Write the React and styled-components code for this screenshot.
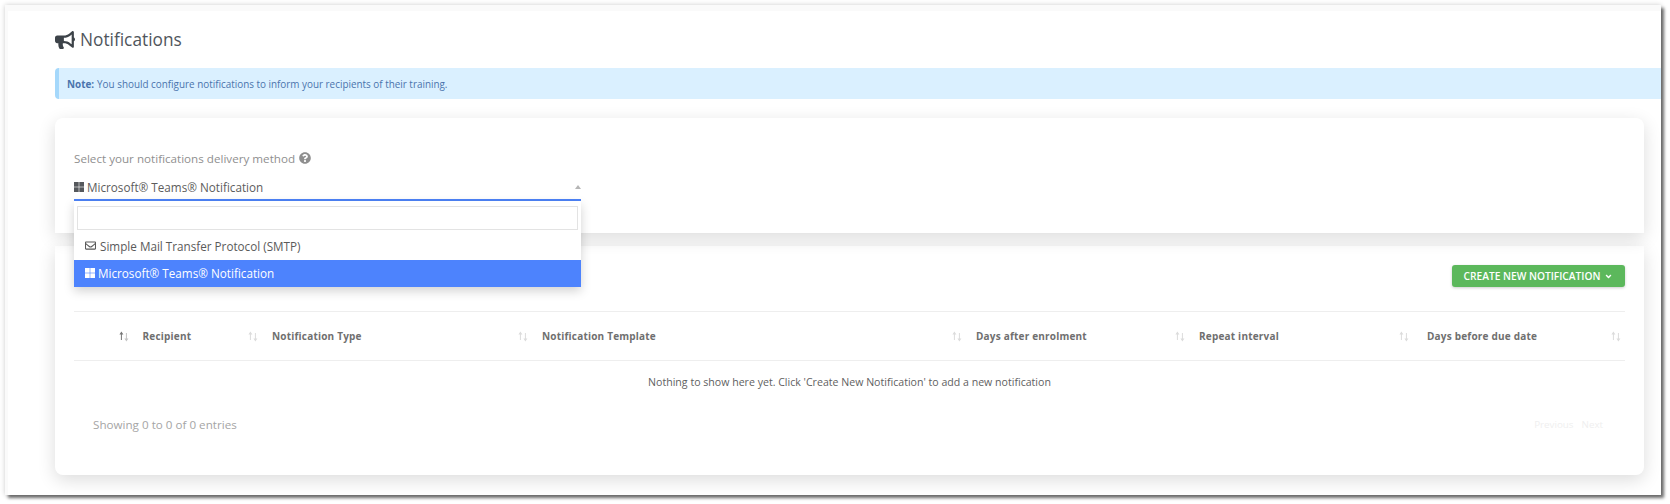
import React from "react";
import styled, { createGlobalStyle } from "styled-components";
import { FaBullhorn, FaQuestionCircle, FaRegEnvelope, FaAngleDown } from "react-icons/fa";

const GlobalStyle = createGlobalStyle`
  html {
    height: 100%;
    overflow: hidden;
  }

  body {
    box-sizing: border-box;
    min-height: 100%;
    margin: 0;
    padding: 5px 0 9px 5px;
    background: #fff;
    font-family: "Open Sans", "Noto Sans", sans-serif;
  }
`;

const Frame = styled.div`
  box-sizing: border-box;
  width: 1656px;
  height: 490px;
  background: #fff;
  border-top: 6px solid #fafafa;
  border-left: 3px solid #fafafa;
  padding-left: 47px;
  box-shadow: 3px 3px 3px rgba(0, 0, 0, 0.55), 0 0 5px rgba(0, 0, 0, 0.2);
  overflow: hidden;
`;

const TitleRow = styled.div`
  height: 57px;
  display: flex;
  align-items: center;
  gap: 5px;
  color: #3d4349;
`;

const Title = styled.h1`
  margin: 0;
  font-size: 17.3px;
  font-weight: 400;
  color: #50565c;
`;

const Alert = styled.div`
  box-sizing: border-box;
  height: 31px;
  display: flex;
  align-items: center;
  padding-left: 8px;
  background: #daf0ff;
  border-left: 4px solid #a5d8fb;
  border-radius: 4px 0 0 4px;
  font-size: 9.9px;
  color: #4a74ad;

  b {
    font-weight: 700;
    margin-right: 3px;
  }
`;

const Card = styled.section`
  position: relative;
  box-sizing: border-box;
  width: 1589px;
  padding: 0 19px;
  background: #fff;
  box-shadow: 0 5px 18px rgba(0, 0, 0, 0.14);
`;

const MethodCard = styled(Card)`
  z-index: 2;
  height: 115px;
  margin-top: 19px;
  padding-top: 30px;
  border-radius: 8px 8px 0 0;
`;

const TableCard = styled(Card)`
  height: 229px;
  margin-top: 13px;
  padding-top: 19px;
  border-radius: 0 0 8px 8px;
`;

const Label = styled.div`
  display: flex;
  align-items: center;
  gap: 4px;
  height: 20px;
  font-size: 11.65px;
  color: #8f8f8f;

  svg {
    font-size: 12px;
    color: #8f8f8f;
  }
`;

const Select = styled.div`
  position: relative;
  box-sizing: border-box;
  width: 507px;
  height: 24px;
  margin-top: 9px;
  padding-bottom: 3px;
  display: flex;
  align-items: center;
  gap: 3px;
  border-bottom: 2px solid #4d83f8;
  font-size: 11.7px;
  color: #5c5c5c;
`;

const Caret = styled.span`
  position: absolute;
  right: 0;
  top: 8px;
  border-left: 3px solid transparent;
  border-right: 3px solid transparent;
  border-bottom: 4px solid #b5b5b5;
`;

const Menu = styled.div`
  position: absolute;
  z-index: 5;
  left: 19px;
  top: 83px;
  box-sizing: border-box;
  width: 507px;
  height: 86px;
  background: #fff;
  padding-top: 5px;
  box-shadow: 0 4px 10px rgba(0, 0, 0, 0.18);
`;

const SearchInput = styled.input`
  display: block;
  box-sizing: border-box;
  width: 501px;
  height: 24px;
  margin: 0 3px 3px;
  border: 1px solid #e3e3e3;
  background: #fff;
  outline: none;
`;

const Option = styled.div`
  box-sizing: border-box;
  height: 27px;
  padding: 0 0 2px 11px;
  display: flex;
  align-items: center;
  gap: ${(p) => (p.$active ? "3px" : "4px")};
  font-size: 11.7px;
  color: ${(p) => (p.$active ? "#fff" : "#5a5a5a")};
  background: ${(p) => (p.$active ? "#4d83fd" : "#fff")};

  svg {
    font-size: 11px;
  }
`;

const Tiles = styled.svg`
  width: 10px;
  height: 10px;
  flex: none;
  fill: ${(p) => (p.$light ? "#ffffff" : "#55585c")};
`;

const Toolbar = styled.div`
  display: flex;
  justify-content: flex-end;
  height: 46px;
`;

const GreenButton = styled.button`
  box-sizing: border-box;
  width: 173px;
  height: 22px;
  display: flex;
  align-items: center;
  justify-content: center;
  gap: 4px;
  border: 0;
  border-radius: 3px;
  background: #5cb85c;
  color: #fff;
  font-family: inherit;
  font-size: 10.2px;
  font-weight: 600;
  box-shadow: 0 1px 3px rgba(0, 0, 0, 0.2);

  svg {
    font-size: 9px;
  }
`;

const HeadRow = styled.div`
  display: grid;
  grid-template-columns: 58.5px 129.5px 270px 434px 223px 228px 208px;
  height: 48px;
  border-top: 1px solid #eeeeee;
  border-bottom: 1px solid #eeeeee;
`;

const HeadCell = styled.div`
  display: flex;
  align-items: center;
  justify-content: space-between;
  padding: 0 4px 0 10px;
  font-size: 10px;
  font-weight: 700;
  color: #6f6f6f;
  letter-spacing: 0.2px;

  &:nth-child(6) {
    padding-right: 8px;
  }
`;

const SortArrows = styled.svg`
  width: 10px;
  height: 11px;
  flex: none;
`;

const EmptyRow = styled.div`
  height: 42px;
  display: flex;
  align-items: center;
  justify-content: center;
  font-size: 10.6px;
  color: #5f5f5f;
`;

const Footer = styled.div`
  display: flex;
  align-items: center;
  justify-content: space-between;
  height: 42px;
  padding: 0 22px 0 19px;
  font-size: 11.65px;
  color: #a5a5a5;
`;

const Pager = styled.div`
  display: flex;
  gap: 8px;
  font-size: 9.8px;
  color: #efefef;
`;

const TeamsIcon = ({ light }) => (
  <Tiles viewBox="0 0 10 10" $light={light}>
    <rect x="0" y="0" width="4.7" height="4.7" />
    <rect x="5.3" y="0" width="4.7" height="4.7" />
    <rect x="0" y="5.3" width="4.7" height="4.7" />
    <rect x="5.3" y="5.3" width="4.7" height="4.7" />
  </Tiles>
);

const Sort = ({ active }) => (
  <SortArrows viewBox="0 0 10 11">
    <path d="M2.4 0.5 L0.4 3.4 H1.9 V9 H2.9 V3.4 H4.4 Z" fill={active ? "#777" : "#dcdcdc"} />
    <path d="M7.4 10.5 L5.4 7.6 H6.9 V2 H7.9 V7.6 H9.4 Z" fill={active ? "#c4c4c4" : "#dcdcdc"} />
  </SortArrows>
);

const columns = [
  "",
  "Recipient",
  "Notification Type",
  "Notification Template",
  "Days after enrolment",
  "Repeat interval",
  "Days before due date",
];

export default function App() {
  return (
    <>
      <GlobalStyle />
      <Frame>
        <TitleRow>
          <FaBullhorn size={20} />
          <Title>Notifications</Title>
        </TitleRow>
        <Alert>
          <b>Note:</b> You should configure notifications to inform your recipients of their training.
        </Alert>
        <MethodCard>
          <Label>
            Select your notifications delivery method <FaQuestionCircle />
          </Label>
          <Select>
            <TeamsIcon />
            Microsoft® Teams® Notification
            <Caret />
          </Select>
          <Menu>
            <SearchInput />
            <Option>
              <FaRegEnvelope />
              Simple Mail Transfer Protocol (SMTP)
            </Option>
            <Option $active>
              <TeamsIcon light />
              Microsoft® Teams® Notification
            </Option>
          </Menu>
        </MethodCard>
        <TableCard>
          <Toolbar>
            <GreenButton>
              CREATE NEW NOTIFICATION <FaAngleDown />
            </GreenButton>
          </Toolbar>
          <HeadRow>
            {columns.map((name, i) => (
              <HeadCell key={i}>
                <span>{name}</span>
                <Sort active={i === 0} />
              </HeadCell>
            ))}
          </HeadRow>
          <EmptyRow>Nothing to show here yet. Click 'Create New Notification' to add a new notification</EmptyRow>
          <Footer>
            <span>Showing 0 to 0 of 0 entries</span>
            <Pager>
              <span>Previous</span>
              <span>Next</span>
            </Pager>
          </Footer>
        </TableCard>
      </Frame>
    </>
  );
}
